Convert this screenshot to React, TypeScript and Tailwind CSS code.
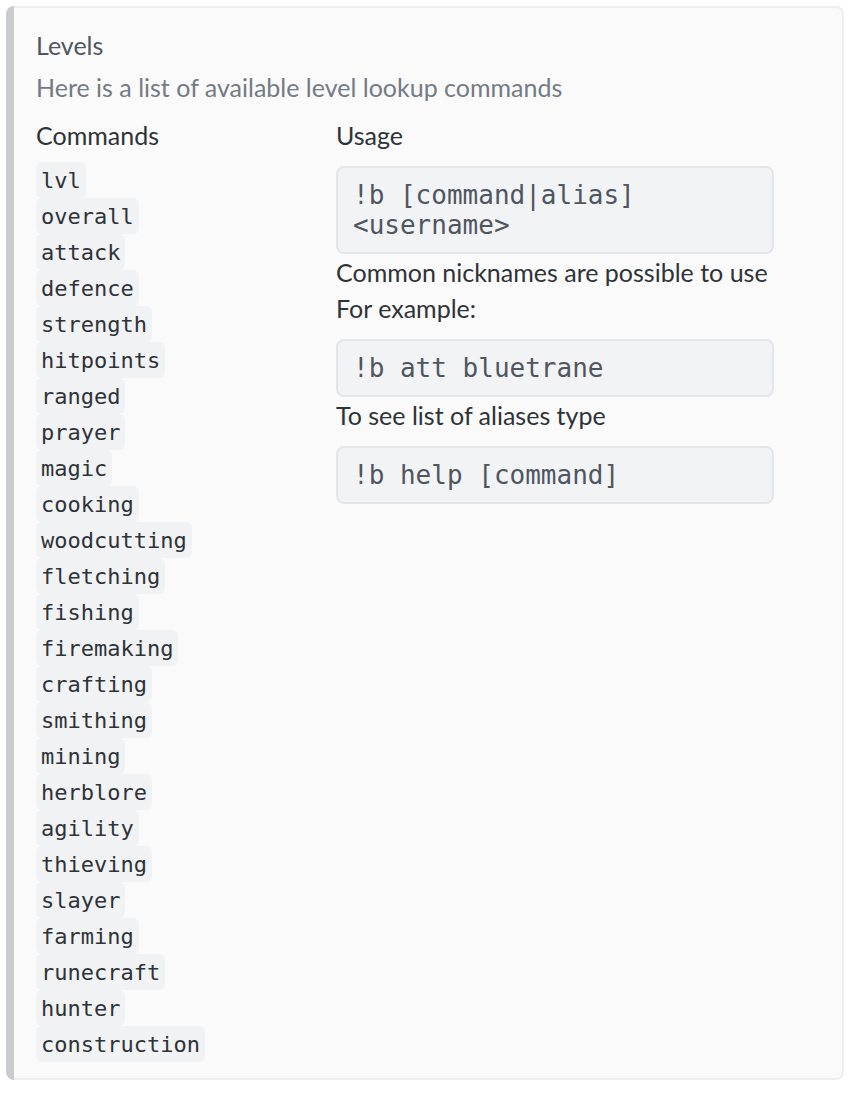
const commands = [
  "lvl",
  "overall",
  "attack",
  "defence",
  "strength",
  "hitpoints",
  "ranged",
  "prayer",
  "magic",
  "cooking",
  "woodcutting",
  "fletching",
  "fishing",
  "firemaking",
  "crafting",
  "smithing",
  "mining",
  "herblore",
  "agility",
  "thieving",
  "slayer",
  "farming",
  "runecraft",
  "hunter",
  "construction",
];

const mono = "font-['DejaVu_Sans_Mono',monospace]";

const CodeBlock: React.FC<{ lines: string[]; className?: string }> = ({ lines, className }) => (
  <div
    className={`w-[438px] rounded-[8px] border-2 border-[#e3e5e8] bg-[#f2f3f5] px-[15px] py-[12px] text-[26px] leading-[30px] text-[#4f5660] ${mono} ${className ?? ""}`}
  >
    {lines.map((l) => (
      <div key={l} className="whitespace-pre">
        {l}
      </div>
    ))}
  </div>
);

export default function App() {
  return (
    <div className="min-h-screen bg-white pl-[6px] pr-[12px] pt-[6px] font-['Lato',sans-serif]">
      <div className="flex w-[838px]">
        {/* colour bar */}
        <div className="w-[8px] shrink-0 rounded-l-[8px] bg-[#c9cbce]" />

        <div className="flex-1 rounded-r-[8px] border-2 border-l-0 border-[#eeeeee] bg-[#fafafa] pb-[16px] pl-[22px] pt-[23px]">
          <div className="text-[25px] leading-[28px] text-[#4f5660]">Levels</div>
          <div className="mt-[14px] text-[25px] leading-[28px] text-[#747b84]">
            Here is a list of available level lookup commands
          </div>

          <div className="mt-[19px] grid grid-cols-[300px_1fr]">
            {/* Commands field */}
            <div>
              <div className="text-[25px] leading-[30px] text-[#2e3338]">Commands</div>
              <div className="mt-[12px] flex flex-col">
                {commands.map((c) => (
                  <div key={c} className="flex h-[36px]">
                    <span
                      className={`flex h-full items-center rounded-[6px] bg-[#f1f2f4] px-[5px] pt-[1px] text-[22px] text-[#2e3338] ${mono}`}
                    >
                      {c}
                    </span>
                  </div>
                ))}
              </div>
            </div>

            {/* Usage field */}
            <div>
              <div className="text-[25px] leading-[30px] text-[#2e3338]">Usage</div>
              <div className="mt-[16px] text-[25px] leading-[36px] text-[#2e3338]">
                <CodeBlock lines={["!b [command|alias]", "<username>"]} />
                <div>Common nicknames are possible to use</div>
                <div>For example:</div>
                <CodeBlock lines={["!b att bluetrane"]} className="mt-[13px]" />
                <div>To see list of aliases type</div>
                <CodeBlock lines={["!b help [command]"]} className="mt-[13px]" />
              </div>
            </div>
          </div>
        </div>
      </div>
    </div>
  );
}
